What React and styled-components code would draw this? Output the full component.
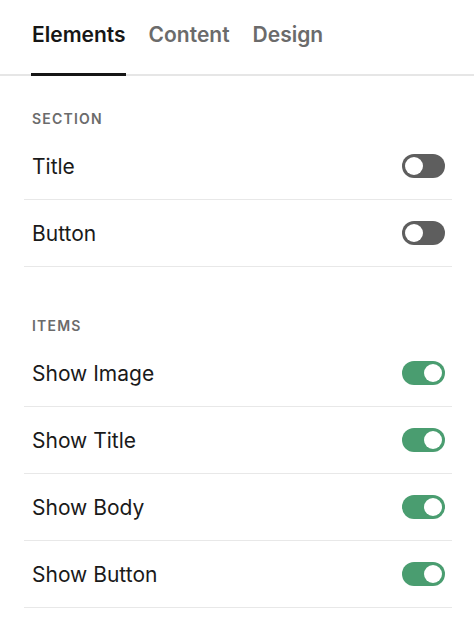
import styled, { createGlobalStyle } from 'styled-components'

const GlobalStyle = createGlobalStyle`
    body {
        margin: 0;
        background: #ffffff;
        font-family: Inter, "Liberation Sans", Arial, sans-serif;
        color: #1a1a1a;
    }
`

const Panel = styled.div`
    width: 474px;
    background: #ffffff;
`

const TabList = styled.div`
    display: flex;
    gap: 23px;
    padding-left: 32px;
    height: 74px;
    border-bottom: 2px solid #e6e6e6;
`

const Tab = styled.div`
    padding-top: 22px;
    height: 51px;
    line-height: 26px;
    font-size: 21px;
    font-weight: 600;
    color: ${p => (p.$active ? '#161616' : '#6b6b6b')};
    border-bottom: 3px solid ${p => (p.$active ? '#161616' : 'transparent')};
    margin-left: ${p => (p.$active ? '-1px' : '0')};
    padding-left: ${p => (p.$active ? '1px' : '0')};
`

const Body = styled.div`
    padding: 0 22px 0 24px;
`

const SectionLabel = styled.div`
    margin-top: ${p => p.$top}px;
    margin-bottom: 6px;
    padding-left: 8px;
    font-size: 14px;
    line-height: 16px;
    font-weight: 600;
    letter-spacing: 1.2px;
    color: #6b6b6b;
`

const Row = styled.div`
    display: flex;
    align-items: center;
    justify-content: space-between;
    height: 66px;
    padding: 0 7px 0 8px;
    border-bottom: 1px solid #e8e8e8;
`

const Label = styled.span`
    font-size: 21px;
    color: #1a1a1a;
`

const Toggle = styled.div`
    position: relative;
    width: 43px;
    height: 24px;
    border-radius: 12px;
    background: ${p => (p.$on ? '#4a9d70' : '#5e5e5e')};
`

const Knob = styled.span`
    position: absolute;
    top: 3px;
    left: ${p => (p.$on ? '22px' : '3px')};
    width: 18px;
    height: 18px;
    border-radius: 50%;
    background: #ffffff;
`

const Switch = ({ on }) => (
    <Toggle $on={on}>
        <Knob $on={on} />
    </Toggle>
)

const section = [
    { label: 'Title', on: false },
    { label: 'Button', on: false },
]

const items = [
    { label: 'Show Image', on: true },
    { label: 'Show Title', on: true },
    { label: 'Show Body', on: true },
    { label: 'Show Button', on: true },
]

const App = () => {
    return (
        <Panel>
            <GlobalStyle />
            <TabList>
                <Tab $active>Elements</Tab>
                <Tab>Content</Tab>
                <Tab>Design</Tab>
            </TabList>
            <Body>
                <SectionLabel $top={35}>SECTION</SectionLabel>
                {section.map(item => (
                    <Row key={item.label}>
                        <Label>{item.label}</Label>
                        <Switch on={item.on} />
                    </Row>
                ))}
                <SectionLabel $top={51}>ITEMS</SectionLabel>
                {items.map(item => (
                    <Row key={item.label}>
                        <Label>{item.label}</Label>
                        <Switch on={item.on} />
                    </Row>
                ))}
            </Body>
        </Panel>
    )
}

export default App
